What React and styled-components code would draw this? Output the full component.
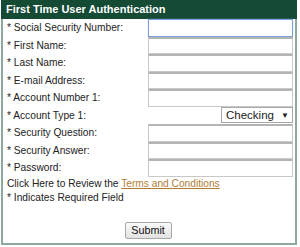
import { Fragment } from "react";
import styled, { createGlobalStyle } from "styled-components";

const GlobalStyle = createGlobalStyle`
  body {
    margin: 0;
    background: #ffffff;
    font-family: "Liberation Sans", Arial, sans-serif;
  }
`;

const Panel = styled.form`
  width: 292px;
  height: 243px;
  margin: 0 0 0 1px;
  border: 2px solid #8ea89c;
  border-top: none;
  display: flex;
  flex-direction: column;
  box-sizing: content-box;
`;

const Header = styled.div`
  height: 19px;
  margin: 0 -2px;
  padding: 0 5px;
  background: #154a35;
  color: #ffffff;
  font-size: 11px;
  font-weight: bold;
  line-height: 19px;
`;

const Fields = styled.div`
  display: grid;
  grid-template-columns: 1fr 145px;
  grid-auto-rows: 17.5px;
  padding: 0 2px 0 4px;
`;

const Label = styled.label`
  font-size: 10.2px;
  color: #222222;
  line-height: 17.5px;
  white-space: nowrap;
`;

const TextInput = styled.input`
  box-sizing: border-box;
  width: 145px;
  height: 17.5px;
  margin: 0;
  padding: 0 2px;
  border: 1px solid #c8c8c8;
  border-top: 2px solid #b4b4b4;
  font: 11px "Liberation Sans", Arial, sans-serif;
  background: #ffffff;
  outline: none;

  &:focus,
  &[data-focus="true"] {
    border: 1px solid #7aa0e0;
    box-shadow: 0 0 1px #9ab8ef;
  }
`;

const SelectBox = styled.div`
  justify-self: end;
  align-self: center;
  box-sizing: border-box;
  width: 72px;
  height: 16px;
  border: 1px solid #a8a8a8;
  display: flex;
  align-items: center;
  justify-content: space-between;
  padding: 0 3px 0 4px;
  font-size: 11.5px;
  color: #222222;
  background: #ffffff;
`;

const Arrow = styled.span`
  font-size: 8px;
  color: #222222;
`;

const Note = styled.div`
  font-size: 10.2px;
  color: #222222;
  padding-left: 4px;
  line-height: 14px;
`;

const Link = styled.a`
  color: #b07d35;
  text-decoration: underline;
`;

const Actions = styled.div`
  display: flex;
  justify-content: center;
  margin-top: 17px;
  padding-right: 2px;
`;

const Button = styled.button`
  box-sizing: border-box;
  width: 47px;
  height: 17px;
  padding: 0;
  font: 10.8px "Liberation Sans", Arial, sans-serif;
  color: #111111;
  background: linear-gradient(#fafafa, #e2e2e2);
  border: 1px solid #a9a9a9;
  border-radius: 2px;
`;

const fields = [
  "Social Security Number:",
  "First Name:",
  "Last Name:",
  "E-mail Address:",
  "Account Number 1:",
  "Account Type 1:",
  "Security Question:",
  "Security Answer:",
  "Password:",
];

export default function App() {
  return (
    <>
      <GlobalStyle />
      <Panel onSubmit={(e) => e.preventDefault()}>
        <Header>First Time User Authentication</Header>
        <Fields>
          {fields.map((label, i) => (
            <Fragment key={label}>
              <Label>* {label}</Label>
              {label === "Account Type 1:" ? (
                <SelectBox>
                  Checking <Arrow>▼</Arrow>
                </SelectBox>
              ) : (
                <TextInput
                  type={label === "Password:" ? "password" : "text"}
                  data-focus={i === 0 ? "true" : "false"}
                />
              )}
            </Fragment>
          ))}
        </Fields>
        <Note>
          Click Here to Review the <Link href="#">Terms and Conditions</Link>
        </Note>
        <Note>* Indicates Required Field</Note>
        <Actions>
          <Button type="submit">Submit</Button>
        </Actions>
      </Panel>
    </>
  );
}
